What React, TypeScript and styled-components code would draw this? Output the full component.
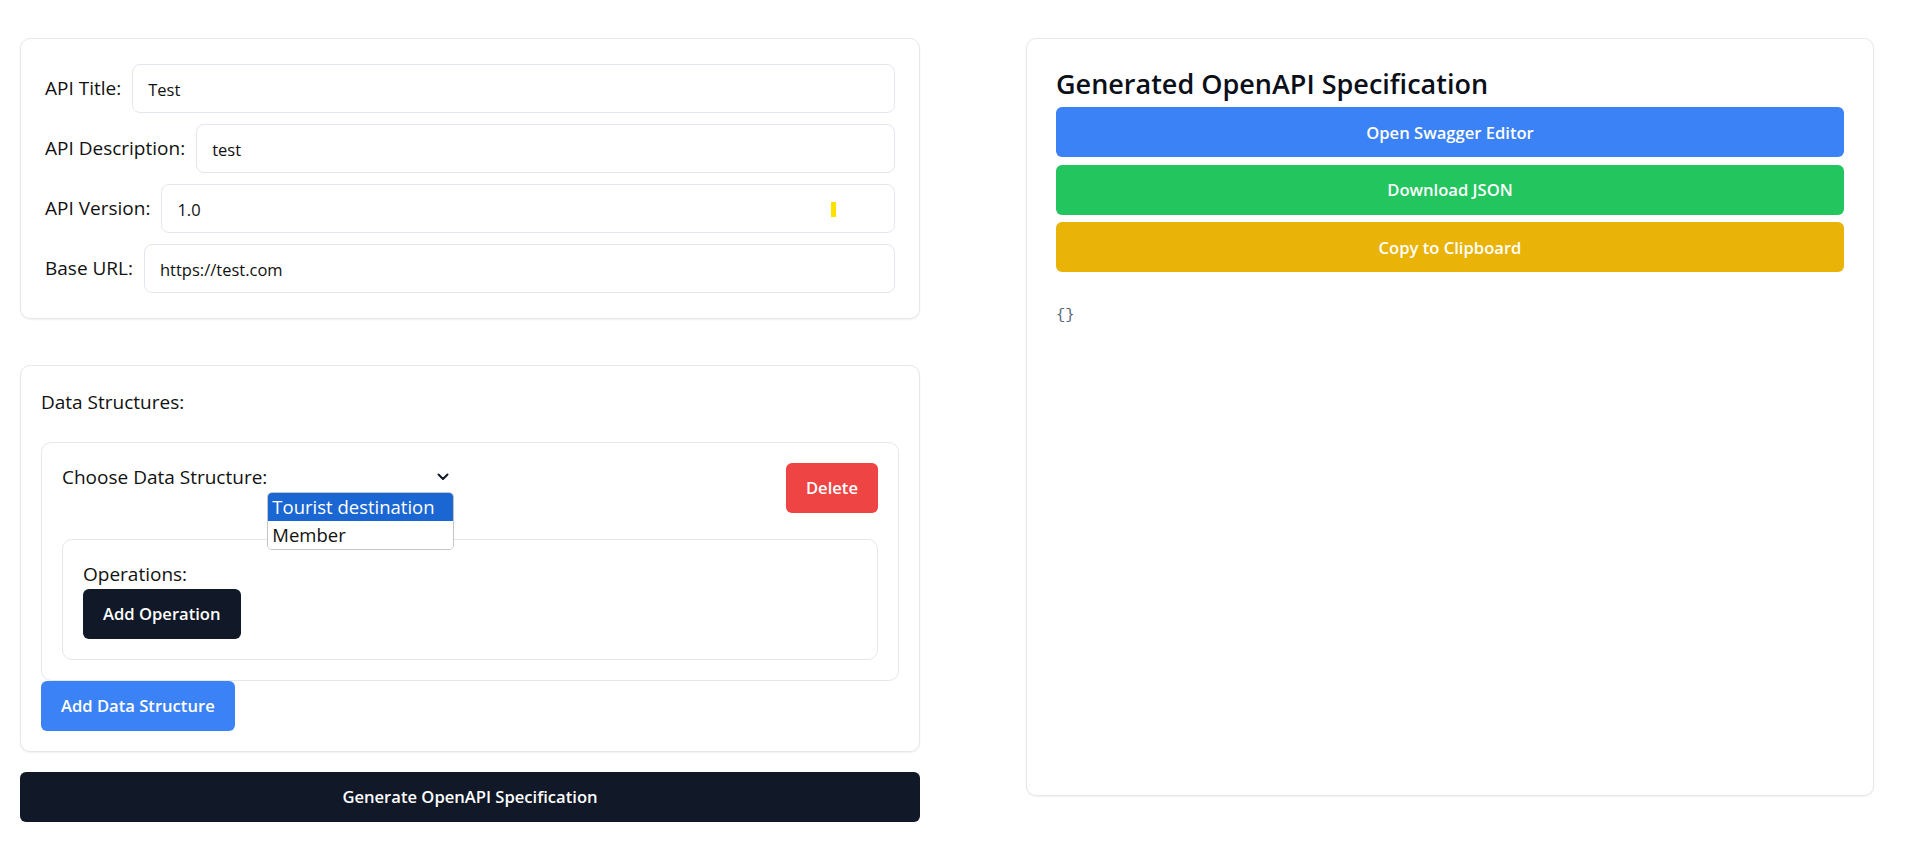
import React from "react";
import styled, { createGlobalStyle } from "styled-components";

const GlobalStyle = createGlobalStyle`
  html, body { margin: 0; padding: 0; background: #ffffff; }
  body {
    font-family: "Open Sans", "Noto Sans", sans-serif;
    color: #111111;
    -webkit-font-smoothing: antialiased;
  }
  *, *::before, *::after { box-sizing: border-box; }
`;

const Page = styled.div`
  display: grid;
  grid-template-columns: 900px 848px;
  column-gap: 106px;
  align-items: start;
  padding: 38px 0 0 20px;
`;

const Column = styled.div`
  display: flex;
  flex-direction: column;
`;

const Card = styled.section<{ $pad: string; $mt?: number; $h?: number }>`
  background: #ffffff;
  border: 1px solid #e5e7eb;
  border-radius: 10px;
  box-shadow: 0 1px 2px rgba(0, 0, 0, 0.06);
  padding: ${(p) => p.$pad};
  margin-top: ${(p) => p.$mt ?? 0}px;
  ${(p) => (p.$h ? `height: ${p.$h}px;` : "")}
`;

const FieldList = styled.div`
  display: flex;
  flex-direction: column;
  gap: 11px;
`;

const FieldRow = styled.label`
  display: flex;
  align-items: center;
`;

const FieldLabel = styled.span<{ $gap?: number }>`
  font-size: 19px;
  line-height: 28.8px;
  margin-right: ${(p) => p.$gap ?? 0}px;
  white-space: nowrap;
`;

const InputWrap = styled.div`
  position: relative;
  flex: 1;
  display: flex;
`;

const TextInput = styled.input`
  flex: 1;
  height: 49px;
  border: 1px solid #e2e6ee;
  border-radius: 8px;
  padding: 2px 15px 0;
  font-family: inherit;
  font-size: 16.5px;
  color: #111111;
  background: #ffffff;
  outline: none;
`;

const Marker = styled.span`
  position: absolute;
  right: 59px;
  top: 18px;
  width: 5px;
  height: 15px;
  background: #ffe000;
`;

const SectionLabel = styled.div`
  font-size: 19px;
  line-height: 28.8px;
  margin-bottom: 25px;
`;

const Box = styled.div<{ $mt?: number }>`
  border: 1px solid #e5e7eb;
  border-radius: 10px;
  padding: 20px;
  margin-top: ${(p) => p.$mt ?? 0}px;
  background: #ffffff;
`;

const ItemHeader = styled.div`
  display: flex;
  justify-content: space-between;
  align-items: flex-start;
`;

const ChooseGroup = styled.div`
  display: flex;
  align-items: flex-start;
`;

const SelectBox = styled.div`
  position: relative;
  width: 187px;
  height: 29px;
  display: flex;
  align-items: center;
  justify-content: flex-end;
  padding-right: 5px;
  color: #111827;
`;

const OptionList = styled.ul`
  position: absolute;
  z-index: 5;
  top: 100%;
  left: 0;
  width: 100%;
  margin: 0;
  padding: 0;
  list-style: none;
  background: #ffffff;
  border: 1px solid #c4c4c4;
  border-radius: 5px;
  overflow: hidden;
  font-family: "Open Sans", "Noto Sans", sans-serif;
`;

const OptionItem = styled.li<{ $active?: boolean }>`
  height: 28px;
  line-height: 28px;
  padding-left: 4px;
  font-size: 18.5px;
  white-space: nowrap;
  color: ${(p) => (p.$active ? "#ffffff" : "#111111")};
  background: ${(p) => (p.$active ? "#1a66d2" : "#ffffff")};
`;

const Button = styled.button<{ $bg: string; $full?: boolean; $mt?: number }>`
  height: 50px;
  padding: 0 20px;
  border: none;
  border-radius: 6px;
  background: ${(p) => p.$bg};
  color: #ffffff;
  font-family: inherit;
  font-size: 16.6px;
  font-weight: 600;
  cursor: pointer;
  align-self: flex-start;
  ${(p) => (p.$full ? "width: 100%; align-self: stretch;" : "")}
  margin-top: ${(p) => p.$mt ?? 0}px;
`;

const Heading = styled.h2`
  margin: 0 0 7px;
  font-size: 27px;
  line-height: 32px;
  font-weight: 600;
  color: #0b0f19;
`;

const ButtonStack = styled.div`
  display: flex;
  flex-direction: column;
  gap: 7.5px;
`;

const Output = styled.pre`
  margin: 31px 0 0;
  font-family: "Liberation Mono", "DejaVu Sans Mono", monospace;
  font-size: 15.5px;
  line-height: 24px;
  color: #56657a;
`;

const Chevron = () => (
  <svg width="12" height="8" viewBox="0 0 12 8" fill="none">
    <path d="M1.5 1.5 L6 6 L10.5 1.5" stroke="currentColor" strokeWidth="2" strokeLinecap="round" strokeLinejoin="round" />
  </svg>
);

const fields = [
  { label: "API Title:", value: "Test" },
  { label: "API Description:", value: "test" },
  { label: "API Version:", value: "1.0", marker: true },
  { label: "Base URL:", value: "https://test.com" },
];

export default function App() {
  return (
    <>
      <GlobalStyle />
      <Page>
        <Column>
          <Card $pad="25px 24px 25px 24px">
            <FieldList>
              {fields.map((f) => (
                <FieldRow key={f.label}>
                  <FieldLabel $gap={11}>{f.label}</FieldLabel>
                  <InputWrap>
                    <TextInput defaultValue={f.value} />
                    {f.marker && <Marker />}
                  </InputWrap>
                </FieldRow>
              ))}
            </FieldList>
          </Card>

          <Card $pad="22px 20px 20px 20px" $mt={46}>
            <SectionLabel>Data Structures:</SectionLabel>
            <Box>
              <ItemHeader>
                <ChooseGroup>
                  <FieldLabel>Choose Data Structure:</FieldLabel>
                  <SelectBox>
                    <Chevron />
                    <OptionList>
                      <OptionItem $active>Tourist destination</OptionItem>
                      <OptionItem>Member</OptionItem>
                    </OptionList>
                  </SelectBox>
                </ChooseGroup>
                <Button $bg="#ef4444">Delete</Button>
              </ItemHeader>
              <Box $mt={26}>
                <FieldLabel as="div">Operations:</FieldLabel>
                <Button $bg="#111827">Add Operation</Button>
              </Box>
            </Box>
            <Button $bg="#3b82f6">Add Data Structure</Button>
          </Card>

          <Button $bg="#111827" $full $mt={20}>
            Generate OpenAPI Specification
          </Button>
        </Column>

        <Card $pad="29px 29px" $h={758}>
          <Heading>Generated OpenAPI Specification</Heading>
          <ButtonStack>
            <Button $bg="#3b82f6" $full>Open Swagger Editor</Button>
            <Button $bg="#22c55e" $full>Download JSON</Button>
            <Button $bg="#eab308" $full>Copy to Clipboard</Button>
          </ButtonStack>
          <Output>{"{}"}</Output>
        </Card>
      </Page>
    </>
  );
}
